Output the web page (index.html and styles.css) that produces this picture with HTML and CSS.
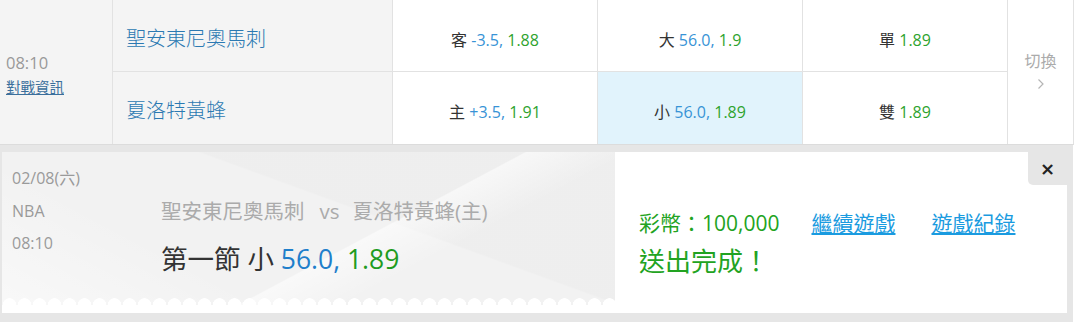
FILE: index.html
```html
<!DOCTYPE html>
<html lang="zh-Hant">
<head>
<meta charset="utf-8">
<title>投注</title>
<link rel="stylesheet" href="styles.css">
</head>
<body>
<div class="page">
  <div class="match">
    <div class="cell info">
      <span class="time">08:10</span>
      <a class="vs-link" href="#">對戰資訊</a>
    </div>
    <div class="cell team">聖安東尼奧馬刺</div>
    <div class="cell odds"><span class="txt"><span class="lbl">客</span> <span class="line">-3.5,</span> <span class="rate">1.88</span></span></div>
    <div class="cell odds"><span class="txt"><span class="lbl">大</span> <span class="line">56.0,</span> <span class="rate">1.9</span></span></div>
    <div class="cell odds"><span class="txt"><span class="lbl">單</span> <span class="rate">1.89</span></span></div>
    <div class="cell switch">
      <span>切換</span>
      <svg class="chev" width="8" height="12" viewBox="0 0 8 12"><path d="M1.5 1.5 L6 6 L1.5 10.5" fill="none" stroke="#b5b5b5" stroke-width="1.2"/></svg>
    </div>
    <div class="cell team">夏洛特黃蜂</div>
    <div class="cell odds"><span class="txt"><span class="lbl">主</span> <span class="line">+3.5,</span> <span class="rate">1.91</span></span></div>
    <div class="cell odds selected"><span class="txt"><span class="lbl">小</span> <span class="line">56.0,</span> <span class="rate">1.89</span></span></div>
    <div class="cell odds"><span class="txt"><span class="lbl">雙</span> <span class="rate">1.89</span></span></div>
  </div>

  <div class="result">
    <div class="panel">
      <div class="ticket">
        <div class="meta">
          <div>02/08(六)</div>
          <div>NBA</div>
          <div>08:10</div>
        </div>
        <div class="bet">
          <div class="teams">聖安東尼奧馬刺<span class="vs">vs</span>夏洛特黃蜂(主)</div>
          <div class="pick">第一節 小 <span class="line">56.0,</span> <span class="rate">1.89</span></div>
        </div>
      </div>
      <div class="status">
        <div class="row1">
          <span class="coins">彩幣：100,000</span>
          <a class="link first" href="#">繼續遊戲</a>
          <a class="link second" href="#">遊戲紀錄</a>
        </div>
        <div class="done">送出完成！</div>
      </div>
      <button class="close" type="button">×</button>
    </div>
  </div>
</div>
</body>
</html>
```
FILE: styles.css
```css
* { box-sizing: border-box; }
html, body { margin: 0; padding: 0; background: #fff; }
body {
  font-family: "Open Sans", "Noto Sans CJK TC", sans-serif;
  color: #333;
}
.page { width: 1074px; }

/* top match table */
.match {
  display: grid;
  grid-template-columns: 112px 279px 204px 204px 204px 65px;
  grid-template-rows: 71px 72px;
  gap: 1px;
  background: #e2e2e2;
  border-bottom: 1px solid #dcdcdc;
  border-right: 1px solid #e2e2e2;
}
.cell {
  background: #fff;
  display: flex;
  align-items: center;
}
.info {
  grid-row: 1 / span 2;
  background: #f4f4f4;
  flex-direction: column;
  align-items: flex-start;
  justify-content: center;
  padding: 6px 0 0 6px;
}
.time { font-size: 16.5px; color: #999; line-height: 22px; }
.vs-link {
  font-size: 14.5px;
  color: #3b6f9c;
  line-height: 22px;
  margin-top: 3px;
  text-decoration: underline;
}
.team {
  background: #f4f4f4;
  font-size: 20px;
  font-weight: 300;
  color: #2b79b2;
  padding: 3px 0 0 13px;
}
.odds {
  justify-content: center;
  font-size: 16px;
  padding-top: 6px;
}
.odds .txt { white-space: pre; }
.odds .lbl { color: #333; }
.odds .line { color: #3893d6; }
.odds .rate { color: #2ea32e; }
.odds.selected { background: #e1f3fc; }
.switch {
  grid-row: 1 / span 2;
  grid-column: 6;
  flex-direction: column;
  justify-content: center;
  color: #ababab;
  font-size: 16px;
  padding-bottom: 4px;
}
.switch span { line-height: 22px; }
.chev { margin-top: 6px; }

/* result panel */
.result {
  width: 1073px;
  background: #e6e6e6;
  padding: 7px 6px 9px 2px;
}
.panel {
  position: relative;
  background: #fff;
  height: 161px;
  display: flex;
}
.ticket {
  position: relative;
  width: 613px;
  height: 153px;
  display: flex;
  background:
    linear-gradient(152deg, transparent 58%, rgba(255,255,255,0.55) 58.3%, transparent 70%),
    linear-gradient(28deg, rgba(255,255,255,0.5) 0, transparent 30%),
    linear-gradient(200deg, rgba(0,0,0,0.015) 40%, transparent 40.5%),
    #f2f2f2;
}
.ticket::after {
  content: "";
  position: absolute;
  left: 0;
  right: 0;
  bottom: 0;
  height: 9px;
  background: radial-gradient(circle at 50% 100%, #fff 6.5px, transparent 7px) 0 0 / 15px 9px repeat-x;
}
.meta {
  width: 159px;
  padding: 10px 0 0 10px;
  font-size: 16px;
  color: #9a9a9a;
  line-height: 32.5px;
}
.bet { padding-top: 45px; }
.teams {
  font-size: 20.5px;
  color: #ababab;
  line-height: 28px;
}
.teams .vs { margin: 0 13px 0 15px; }
.pick {
  font-size: 26.5px;
  color: #333;
  line-height: 36px;
  margin-top: 16px;
}
.pick .line { color: #1f7fcb; }
.pick .rate { color: #1f9c1f; }

.status {
  padding: 56px 0 0 24px;
}
.row1 {
  display: flex;
  align-items: center;
  line-height: 30px;
}
.coins { font-size: 21px; color: #22a322; }
.link {
  font-size: 21px;
  color: #1a9be0;
  text-decoration: underline;
}
.link.first { margin-left: 32px; }
.link.second { margin-left: 36px; }
.done {
  font-size: 26px;
  color: #22a322;
  line-height: 36px;
  margin-top: 5px;
}
.close {
  position: absolute;
  top: 0;
  right: 0;
  width: 39px;
  height: 33px;
  border: 0;
  padding: 0;
  background: #e6e6e6;
  border-bottom-left-radius: 5px;
  font-family: "DejaVu Sans", sans-serif;
  font-size: 18px;
  font-weight: bold;
  color: #222;
  line-height: 30px;
}
```
